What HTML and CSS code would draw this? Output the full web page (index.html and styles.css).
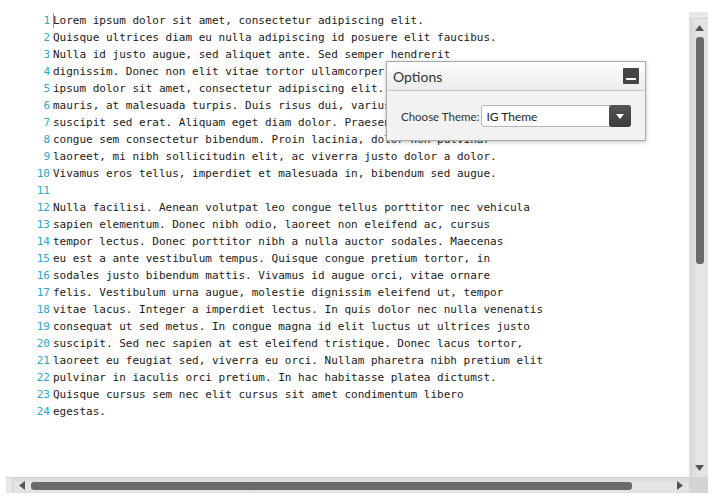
FILE: index.html
```html
<!DOCTYPE html>
<html>
<head>
<meta charset="utf-8">
<link rel="stylesheet" href="styles.css">
</head>
<body>
<div class="editor">
  <div class="viewport">
    <div class="code">
      <div class="gutter">
        <div>1</div><div>2</div><div>3</div><div>4</div><div>5</div><div>6</div><div>7</div><div>8</div><div>9</div><div>10</div><div>11</div><div>12</div><div>13</div><div>14</div><div>15</div><div>16</div><div>17</div><div>18</div><div>19</div><div>20</div><div>21</div><div>22</div><div>23</div><div>24</div>
      </div>
      <div class="lines">
        <div class="line first"><span class="caret"></span>Lorem ipsum dolor sit amet, consectetur adipiscing elit.</div>
        <div class="line">Quisque ultrices diam eu nulla adipiscing id posuere elit faucibus.</div>
        <div class="line">Nulla id justo augue, sed aliquet ante. Sed semper hendrerit</div>
        <div class="line">dignissim. Donec non elit vitae tortor ullamcorper faucibus. Lorem</div>
        <div class="line">ipsum dolor sit amet, consectetur adipiscing elit. Proin tincidunt</div>
        <div class="line">mauris, at malesuada turpis. Duis risus dui, varius ac porttitor vel,</div>
        <div class="line">suscipit sed erat. Aliquam eget diam dolor. Praesent vel ipsum nisi,</div>
        <div class="line">congue sem consectetur bibendum. Proin lacinia, dolor non pulvinar</div>
        <div class="line">laoreet, mi nibh sollicitudin elit, ac viverra justo dolor a dolor.</div>
        <div class="line">Vivamus eros tellus, imperdiet et malesuada in, bibendum sed augue.</div>
        <div class="line">&nbsp;</div>
        <div class="line">Nulla facilisi. Aenean volutpat leo congue tellus porttitor nec vehicula</div>
        <div class="line">sapien elementum. Donec nibh odio, laoreet non eleifend ac, cursus</div>
        <div class="line">tempor lectus. Donec porttitor nibh a nulla auctor sodales. Maecenas</div>
        <div class="line">eu est a ante vestibulum tempus. Quisque congue pretium tortor, in</div>
        <div class="line">sodales justo bibendum mattis. Vivamus id augue orci, vitae ornare</div>
        <div class="line">felis. Vestibulum urna augue, molestie dignissim eleifend ut, tempor</div>
        <div class="line">vitae lacus. Integer a imperdiet lectus. In quis dolor nec nulla venenatis</div>
        <div class="line">consequat ut sed metus. In congue magna id elit luctus ut ultrices justo</div>
        <div class="line">suscipit. Sed nec sapien at est eleifend tristique. Donec lacus tortor,</div>
        <div class="line">laoreet eu feugiat sed, viverra eu orci. Nullam pharetra nibh pretium elit</div>
        <div class="line">pulvinar in iaculis orci pretium. In hac habitasse platea dictumst.</div>
        <div class="line">Quisque cursus sem nec elit cursus sit amet condimentum libero</div>
        <div class="line">egestas.</div>
      </div>
    </div>
    <div class="options">
      <div class="options-head">
        <span class="options-title">Options</span>
        <span class="min-btn"><span class="min-bar"></span></span>
      </div>
      <div class="options-body">
        <span class="label">Choose Theme:</span>
        <div class="select">
          <span class="select-text">IG Theme</span>
          <span class="select-btn"><svg width="8" height="5" viewBox="0 0 8 5"><path d="M0 0h8L4 5z" fill="#fff"/></svg></span>
        </div>
      </div>
    </div>
  </div>
  <div class="vscroll">
    <div class="vcap"></div>
    <div class="arrow up"><svg width="9" height="6" viewBox="0 0 9 6"><path d="M4.5 0L9 6H0z" fill="#555"/></svg></div>
    <div class="vtrack"><div class="vthumb"></div></div>
    <div class="arrow down"><svg width="9" height="6" viewBox="0 0 9 6"><path d="M0 0h9L4.5 6z" fill="#555"/></svg></div>
  </div>
  <div class="hscroll">
    <div class="hcap"></div>
    <div class="harrow left"><svg width="6" height="9" viewBox="0 0 6 9"><path d="M6 0v9L0 4.5z" fill="#555"/></svg></div>
    <div class="htrack"><div class="hthumb"></div></div>
    <div class="harrow right"><svg width="6" height="9" viewBox="0 0 6 9"><path d="M0 0v9l6-4.5z" fill="#555"/></svg></div>
  </div>
  <div class="corner"></div>
</div>
</body>
</html>
```
FILE: styles.css
```css
html, body {
  margin: 0;
  padding: 0;
  background: #fff;
}
body {
  width: 715px;
  height: 500px;
  overflow: hidden;
}
.editor {
  margin: 12px 7px 0 6px;
  width: 702px;
  height: 481px;
  display: grid;
  grid-template-columns: 683px 19px;
  grid-template-rows: 465px 16px;
}
.viewport {
  position: relative;
  overflow: hidden;
  background: #fff;
}
.code {
  display: flex;
  font-family: "DejaVu Sans Mono", monospace;
  font-size: 11px;
  line-height: 17px;
  padding-top: 0;
}
.gutter {
  width: 44px;
  text-align: right;
  color: #2fa6c8;
  flex: none;
}
.lines {
  margin-left: 3px;
  color: #1a1a1a;
}
.line {
  position: relative;
  white-space: pre;
}
.caret {
  position: absolute;
  left: 0;
  top: 1px;
  width: 1px;
  height: 15px;
  background: #999;
}
.options {
  position: absolute;
  left: 380px;
  top: 49px;
  width: 258px;
  height: 78px;
  border: 1px solid #a9a9a9;
  background: #f2f2f2;
  box-shadow: 0 1px 4px rgba(0,0,0,0.25);
  font-family: Lato, "Open Sans", sans-serif;
}
.options-head {
  height: 28px;
  border-bottom: 1px solid #c4c4c4;
  background: linear-gradient(#fdfdfd, #ececec);
  display: flex;
  align-items: center;
  justify-content: space-between;
  padding: 0 6px 0 6px;
}
.options-title {
  font-size: 14px;
  color: #333;
}
.min-btn {
  width: 16px;
  height: 16px;
  background: #454545;
  border-radius: 1px;
  display: flex;
  align-items: flex-end;
  justify-content: center;
  box-sizing: border-box;
  padding-bottom: 4px;
}
.min-bar {
  width: 10px;
  height: 2px;
  background: #fff;
}
.options-body {
  display: flex;
  align-items: center;
  padding: 14px 0 0 14px;
}
.label {
  font-size: 11.5px;
  color: #333;
  margin-right: 2px;
}
.select {
  width: 150px;
  height: 22px;
  box-sizing: border-box;
  border: 1px solid #b5b5b5;
  border-radius: 3px;
  background: #fff;
  display: flex;
  align-items: center;
  justify-content: space-between;
}
.select-text {
  font-size: 12px;
  color: #222;
  padding-left: 4px;
}
.select-btn {
  width: 22px;
  height: 22px;
  margin-right: -1px;
  background: linear-gradient(#555, #3a3a3a);
  border-radius: 3px;
  display: flex;
  align-items: center;
  justify-content: center;
}
.vscroll {
  display: flex;
  flex-direction: column;
  background: linear-gradient(to right, #d6d6d6, #e6e6e6 40%, #e2e2e2);
  border-left: 1px solid #e4e4e4;
}
.vcap {
  height: 6px;
  border-bottom: 1px solid #d0d0d0;
  background: #e8e8e8;
}
.arrow {
  height: 18px;
  display: flex;
  align-items: center;
  justify-content: center;
}
.vtrack {
  flex: 1;
  display: flex;
  justify-content: center;
}
.vthumb {
  width: 8px;
  height: 227px;
  background: #6a6a6a;
  border-radius: 3px;
  margin-left: 1px;
}
.hscroll {
  display: flex;
  align-items: center;
  background: linear-gradient(#d8d8d8, #e6e6e6 40%, #e2e2e2);
  border-top: 1px solid #cfcfcf;
}
.hcap {
  width: 6px;
  height: 100%;
  border-right: 1px solid #d0d0d0;
  background: #e8e8e8;
}
.harrow {
  width: 18px;
  display: flex;
  align-items: center;
  justify-content: center;
}
.htrack {
  flex: 1;
  display: flex;
}
.hthumb {
  width: 601px;
  height: 8px;
  background: #6a6a6a;
  border-radius: 3px;
}
.corner {
  background: #d4d4d4;
}
```
